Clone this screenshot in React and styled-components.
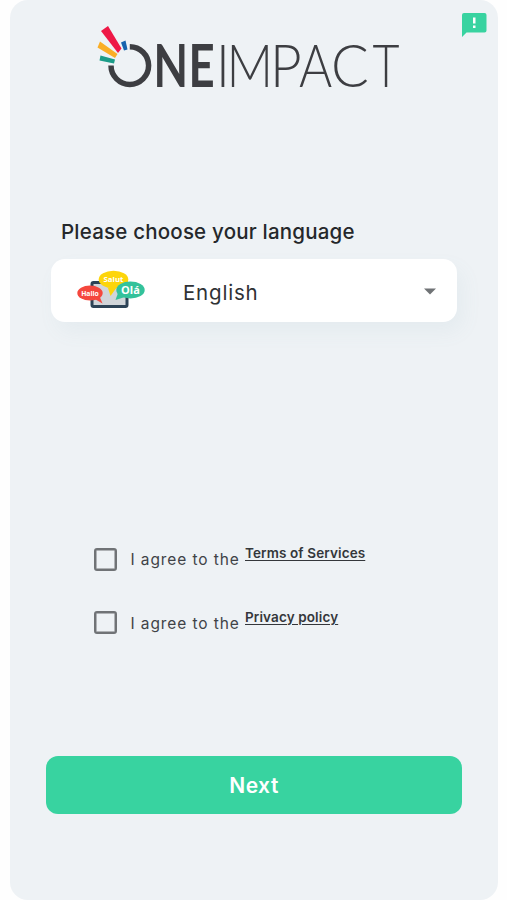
import React, { useState } from "react";
import styled, { createGlobalStyle } from "styled-components";

const GlobalStyle = createGlobalStyle`
  * {
    box-sizing: border-box;
  }

  body {
    margin: 0;
    background: #fefefe;
    font-family: Inter, "Liberation Sans", sans-serif;
    color: #25282b;
  }
`;

const Screen = styled.main`
  position: relative;
  display: flex;
  flex-direction: column;
  width: 488px;
  height: 900px;
  margin-left: 10px;
  padding: 24px 37px 0 36px;
  border-radius: 18px;
  background: #eef2f5;
`;

const LogoSvg = styled.svg`
  display: block;
  overflow: visible;
  width: 308px;
  height: 70px;
  margin-left: 49px;
`;

const LogoLetter = styled.text`
  fill: #3d3e42;
  font-family: Lato, sans-serif;
  font-size: 59px;
  font-weight: ${(props) => (props.$bold ? 700 : 300)};
`;

const FeedbackButton = styled.button`
  position: absolute;
  top: 12px;
  right: 11px;
  width: 26px;
  height: 26px;
  padding: 0;
  border: 0;
  background: none;

  svg {
    display: block;
  }
`;

const Title = styled.h1`
  margin: 125px 0 0 15px;
  font-size: 20.5px;
  font-weight: 500;
  line-height: 26px;
  letter-spacing: 0.2px;
  white-space: nowrap;
`;

const Select = styled.button`
  display: flex;
  align-items: center;
  width: 406px;
  height: 63px;
  margin: 14px 0 0 5px;
  padding: 0 20px 0 26px;
  border: 0;
  border-radius: 14px;
  background: #fff;
  box-shadow: 6px 10px 20px rgba(120, 150, 165, 0.07);
  color: #2f3235;
  font-family: inherit;
  font-size: 20.5px;
  letter-spacing: 0.8px;
  text-align: left;
`;

const SelectValue = styled.span`
  flex: 1;
  margin: 3px 0 0 38px;
`;

const Arrow = styled.svg`
  margin-top: 1px;
`;

const Agreements = styled.div`
  display: flex;
  flex-direction: column;
  gap: 39.5px;
  margin: 225px 0 0 47.5px;
`;

const Agreement = styled.div`
  display: flex;
  align-items: center;
  height: 24px;
  color: #3f4347;
  font-size: 15.5px;
  letter-spacing: 0.9px;
  white-space: nowrap;
`;

const Checkbox = styled.input`
  appearance: none;
  flex: none;
  width: 23px;
  height: 23px;
  margin: 0 14px 0 0;
  border: 2px solid #707376;
  border-radius: 3px;
  box-shadow: inset 0 0 0 0.5px #707376;

  &:checked {
    background: #38d3a0;
  }
`;

const AgreementLabel = styled.span`
  width: 114.5px;
  margin-top: 1px;
`;

const Link = styled.a`
  margin-top: -12px;
  color: #34373b;
  font-size: 13.5px;
  font-weight: 600;
  letter-spacing: 0.12px;
  text-decoration: underline;
  text-decoration-thickness: 1px;
  text-underline-offset: 2px;
`;

const NextButton = styled.button`
  width: 416px;
  height: 58px;
  margin-top: 121.5px;
  border: 0;
  border-radius: 12px;
  background: #38d3a0;
  color: #fff;
  font-family: inherit;
  font-size: 21px;
  font-weight: 600;
  letter-spacing: 0.5px;
`;

// x is where each letter starts, stretch narrows it to the wordmark's width
const letters = [
  { char: "N", x: 153.5, stretch: 0.76, bold: true },
  { char: "E", x: 188.5, stretch: 0.77, bold: true },
  { char: "I", x: 216, stretch: 0.9 },
  { char: "M", x: 226.5, stretch: 0.87 },
  { char: "P", x: 270, stretch: 0.93 },
  { char: "A", x: 299, stretch: 0.86 },
  { char: "C", x: 331, stretch: 0.95 },
  { char: "T", x: 372.5, stretch: 0.79 },
];

const Logo = () => (
  <LogoSvg viewBox="95 24 308 70" role="img" aria-label="OneImpact">
    <path d="M101 31 L108 26 L121.5 48.5 L118 53 Z" fill="#ee1846" />
    <path d="M100 41.5 L117.5 54 L115 58 L97.5 47.5 Z" fill="#faae26" />
    <path d="M100.5 55.5 L115 59.5 L114 63.5 L99.5 60.5 Z" fill="#1b9c88" />
    <path d="M121 42.5 L125.5 40.5 L127.5 49.5 L124 50.5 Z" fill="#1563ae" />
    <path
      d="M129.8 46.8 A18.8 18.8 0 1 1 111 65.6"
      fill="none"
      stroke="#3d3e42"
      strokeWidth="5.5"
    />
    {letters.map((letter) => (
      <LogoLetter
        key={letter.char}
        $bold={letter.bold}
        transform={`translate(${letter.x} 87) scale(${letter.stretch} 1)`}
      >
        {letter.char}
      </LogoLetter>
    ))}
  </LogoSvg>
);

const LanguagesIcon = () => (
  <svg width="68" height="42" viewBox="0 0 68 42" aria-hidden="true">
    <rect x="15" y="12.5" width="35" height="24" rx="1.5" fill="#d1d5d9" stroke="#2d4356" strokeWidth="3" />
    <path d="M31 18 L33.5 26 L40 17 Z" fill="#fdd50b" />
    <ellipse cx="36.5" cy="9.5" rx="14.8" ry="8.8" fill="#fdd50b" />
    <path d="M16 28 L25.5 33.5 L22 25 Z" fill="#f5473d" />
    <ellipse cx="13" cy="23" rx="12.7" ry="7.5" fill="#f5473d" />
    <path d="M41 23 L38.5 30 L48 27 Z" fill="#33c29b" />
    <ellipse cx="53.5" cy="20" rx="14.2" ry="8.5" fill="#33c29b" />
    <g fill="#fff" fontFamily="Open Sans, sans-serif" fontWeight="700" textAnchor="middle" letterSpacing="0">
      <text x="36.5" y="12" fontSize="7.8">Salut</text>
      <text x="13" y="25.5" fontSize="6.8">Hallo</text>
      <text x="53.5" y="23.7" fontSize="11">Olá</text>
    </g>
  </svg>
);

const App = () => {
  const [terms, setTerms] = useState(false);
  const [privacy, setPrivacy] = useState(false);

  return (
    <>
      <GlobalStyle />
      <Screen>
        <Logo />
        <FeedbackButton aria-label="Feedback">
          <svg width="26" height="26" viewBox="0 0 26 26">
            <path
              d="M3 1 H23.5 Q25.5 1 25.5 3 V18.5 Q25.5 20.5 23.5 20.5 H5.5 L1 25 V3 Q1 1 3 1 Z"
              fill="#38d3a0"
            />
            <path d="M12 5.5 H14.5 V11.5 H12 Z M12 13.5 H14.5 V16 H12 Z" fill="#fff" />
          </svg>
        </FeedbackButton>
        <Title>Please choose your language</Title>
        <Select>
          <LanguagesIcon />
          <SelectValue>English</SelectValue>
          <Arrow width="14" height="7" viewBox="0 0 14 7">
            <path d="M1 0.5 H13 L7 6.5 Z" fill="#707376" />
          </Arrow>
        </Select>
        <Agreements>
          <Agreement>
            <Checkbox
              type="checkbox"
              checked={terms}
              onChange={() => setTerms(!terms)}
            />
            <AgreementLabel>I agree to the</AgreementLabel>
            <Link>Terms of Services</Link>
          </Agreement>
          <Agreement>
            <Checkbox
              type="checkbox"
              checked={privacy}
              onChange={() => setPrivacy(!privacy)}
            />
            <AgreementLabel>I agree to the</AgreementLabel>
            <Link>Privacy policy</Link>
          </Agreement>
        </Agreements>
        <NextButton>Next</NextButton>
      </Screen>
    </>
  );
};

export default App;
